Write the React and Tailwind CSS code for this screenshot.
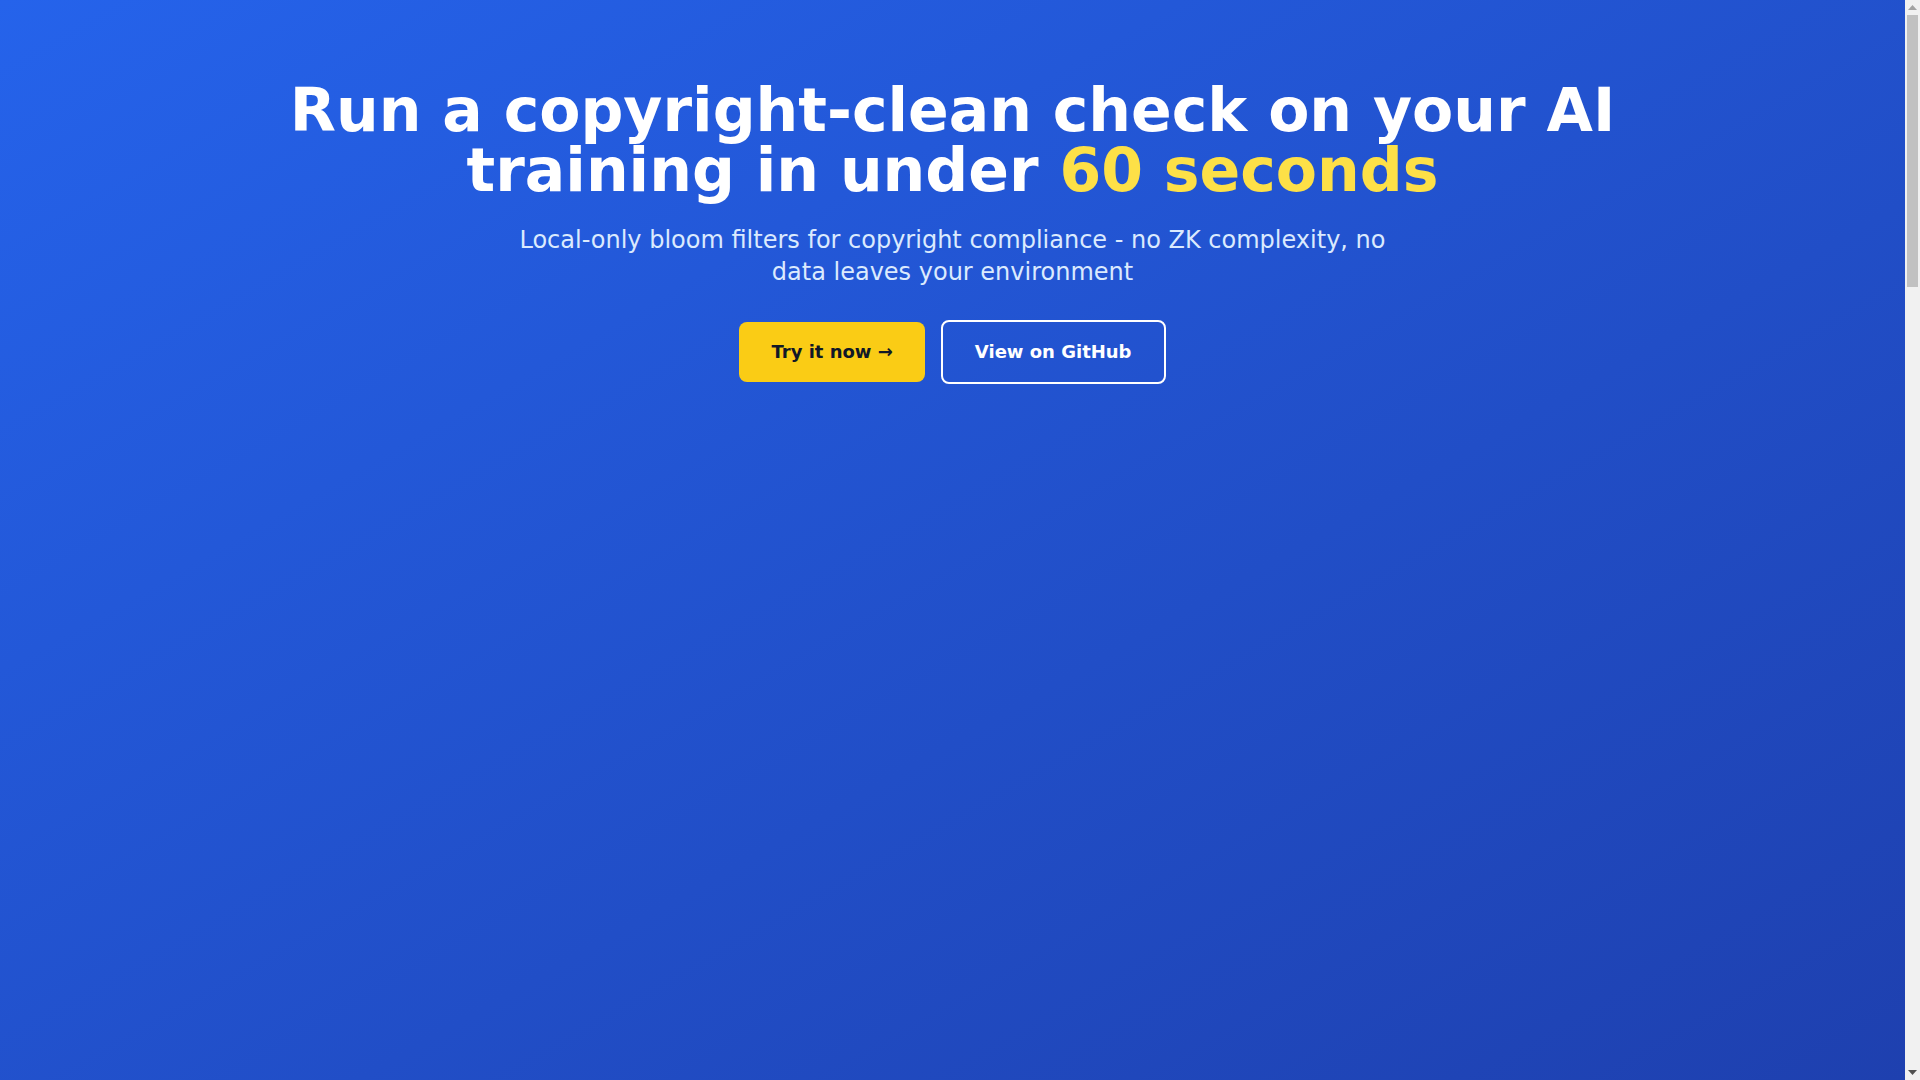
import React from 'react';

function Hero() {
  return (
    <section className="min-h-screen bg-linear-to-br from-[#2563eb] to-[#1e40af] px-4 pt-20 text-center">
      <h1 className="mx-auto mb-6 max-w-[1400px] text-6xl font-bold text-white">
        Run a copyright-clean check on your AI training in under{' '}
        <span className="text-[#fde047]">60 seconds</span>
      </h1>
      <p className="mx-auto mb-8 max-w-4xl text-2xl text-[#dbeafe]">
        Local-only bloom filters for copyright compliance - no ZK complexity, no data leaves your environment
      </p>
      <div className="flex items-center justify-center gap-4">
        <a
          href="#try"
          className="rounded-lg bg-[#facc15] px-8 py-4 text-lg font-bold text-[#111827] hover:bg-[#fde047]"
        >
          Try it now →
        </a>
        <a
          href="#github"
          className="rounded-lg border-2 border-white px-8 py-4 text-lg font-bold text-white hover:bg-white/10"
        >
          View on GitHub
        </a>
      </div>
    </section>
  );
}

// window scrollbar as it shows in the screenshot
function Scrollbar() {
  return (
    <div className="flex h-screen w-[15px] shrink-0 flex-col bg-[#f1f1f1]">
      <div className="flex h-[15px] items-center justify-center">
        <svg width="9" height="5" viewBox="0 0 9 5">
          <path d="M0 5 L4.5 0 L9 5 Z" fill="#a3a3a3" />
        </svg>
      </div>
      <div className="mx-[2px] h-[272px] bg-[#c1c1c1]" />
      <div className="flex-1" />
      <div className="flex h-[15px] items-center justify-center">
        <svg width="9" height="5" viewBox="0 0 9 5">
          <path d="M0 0 L9 0 L4.5 5 Z" fill="#505050" />
        </svg>
      </div>
    </div>
  );
}

export default function App() {
  return (
    <div className="flex h-screen overflow-hidden font-['DejaVu_Sans',sans-serif]">
      <main className="h-screen flex-1 overflow-hidden">
        <Hero />
      </main>
      <Scrollbar />
    </div>
  );
}
